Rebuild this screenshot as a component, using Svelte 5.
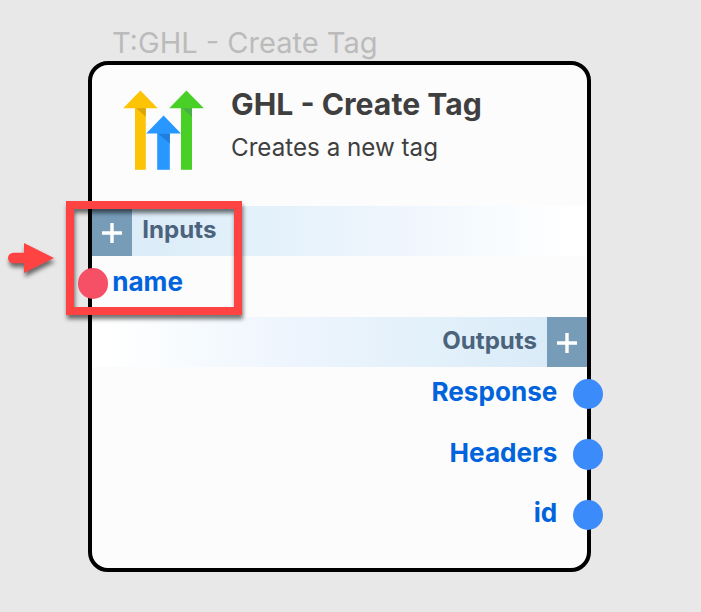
<script>
  const outputs = ['Response', 'Headers', 'id'];
</script>

{#snippet plus()}
  <svg class="plus" width="20" height="20" viewBox="0 0 20 20" aria-hidden="true">
    <path d="M0 10H20M10 0V20" stroke="#fff" stroke-width="3.4" />
  </svg>
{/snippet}

<main class="canvas">
  <div class="node-title">T:GHL - Create Tag</div>
  <section class="node">
    <header>
      <svg class="logo" width="82" height="80" viewBox="0 0 82 80" aria-hidden="true">
        <path d="M12 17H22.8V79.8H12Z" fill="#fdc305" />
        <path d="M12.8 18H22.8V26.8Z" fill="#d9a50b" />
        <path d="M17.4 .5L34.7 18.3H.2Z" fill="#fdc305" />
        <path d="M58 17H69V79.8H58Z" fill="#49d027" />
        <path d="M58.8 18H69V27Z" fill="#4aaf45" />
        <path d="M63.4 .5L80.9 18.3H46.2Z" fill="#49d027" />
        <path d="M34.2 42H46.8V79.8H34.2Z" fill="#2897ff" />
        <path d="M35 43.6H46.8V53.5Z" fill="#207fdd" />
        <path d="M40.6 25.6L58 43.6H23.2Z" fill="#2897ff" />
      </svg>
      <div class="heading">
        <h1>GHL - Create Tag</h1>
        <p>Creates a new tag</p>
      </div>
    </header>

    <div class="bar inputs">
      <span class="add">{@render plus()}</span>
      <span class="bar-label">Inputs</span>
    </div>
    <div class="row in">
      <span class="dot"></span>
      <span class="field name">name</span>
    </div>

    <div class="bar outputs">
      <span class="bar-label">Outputs</span>
      <span class="add">{@render plus()}</span>
    </div>
    <div class="output-list">
      {#each outputs as output}
        <div class="row out">
          <span class="field">{output}</span>
          <span class="dot"></span>
        </div>
      {/each}
    </div>
  </section>

  <div class="highlight"></div>
  <svg class="pointer" width="64" height="48" viewBox="0 0 64 48" aria-hidden="true">
    <path d="M13.3 23H30" stroke="#ff4242" stroke-width="10.6" stroke-linecap="round" />
    <path d="M24 8L54 23L24 38Z" fill="#ff4242" />
  </svg>
</main>

<style>
  :global(body) {
    margin: 0;
    background: #e8e8e8;
  }
  .canvas {
    position: relative;
    box-sizing: border-box;
    width: 701px;
    height: 612px;
    padding: 24px 0 0 88px;
    overflow: hidden;
    background: #e8e8e8;
    font-family: Inter, sans-serif;
  }
  .node-title {
    height: 37px;
    padding-left: 24px;
    color: #bbb;
    font-size: 29.05px;
    line-height: 37px;
    white-space: nowrap;
  }
  .node {
    box-sizing: border-box;
    width: 503.3px;
    height: 511.4px;
    border: 4px solid #000;
    border-radius: 20px;
    background: #fcfcfc;
  }
  header {
    display: flex;
    box-sizing: border-box;
    height: 141px;
    padding: 25px 0 0 31px;
  }
  .logo {
    flex: none;
  }
  .heading {
    padding-left: 26px;
    white-space: nowrap;
  }
  h1 {
    margin: -4px 0 0;
    color: #3f3f3f;
    font-size: 30.2px;
    font-weight: 700;
    line-height: 36px;
  }
  p {
    margin: 11px 0 0;
    color: #3f3f3f;
    font-size: 24.2px;
    line-height: 30px;
  }
  .bar {
    display: flex;
    height: 50.3px;
  }
  .inputs {
    background: linear-gradient(90deg, #d9eaf7 0%, #e3f1fa 34%, #eff5fd 62%, #f7fbfe 80%, #fff 97%);
  }
  .outputs {
    justify-content: flex-end;
    background: linear-gradient(270deg, #d7e9f7 0%, #e3f1fa 34%, #edf4fd 58%, #f7fbfe 80%, #fff 97%);
  }
  .add {
    display: flex;
    flex: none;
    align-items: center;
    justify-content: center;
    width: 40.3px;
    padding-top: 3px;
    box-sizing: border-box;
    background: #779cb8;
  }
  .bar-label {
    padding: 0 10px;
    color: #4c637d;
    font-size: 24.1px;
    font-weight: 700;
    line-height: 47px;
  }
  .row {
    display: flex;
    align-items: center;
    height: 60.5px;
  }
  .dot {
    flex: none;
    width: 30.4px;
    height: 30.4px;
    border-radius: 50%;
  }
  .in {
    margin-left: -14.2px;
    box-sizing: border-box;
    padding-bottom: 6px;
  }
  .in .dot {
    background: #f65066;
  }
  .output-list {
    margin: -3.4px -16.2px 0 0;
  }
  .out {
    justify-content: flex-end;
  }
  .out .dot {
    background: #3c8bfa;
  }
  .field {
    color: #0264dc;
    font-size: 26.1px;
    font-weight: 700;
    line-height: 32px;
    margin-top: -3px;
  }
  .out .field {
    margin: -3.4px 15.8px 0 0;
  }
  .name {
    margin-left: 4px;
  }
  .highlight {
    position: absolute;
    left: 66px;
    top: 201px;
    box-sizing: border-box;
    width: 176px;
    height: 114px;
    border: 8px solid #ff4242;
    filter: drop-shadow(1px 4px 2px rgba(0, 0, 0, 0.55));
  }
  .pointer {
    position: absolute;
    left: 0;
    top: 235px;
    overflow: visible;
    filter: drop-shadow(1px 4px 2px rgba(0, 0, 0, 0.55));
  }
</style>
